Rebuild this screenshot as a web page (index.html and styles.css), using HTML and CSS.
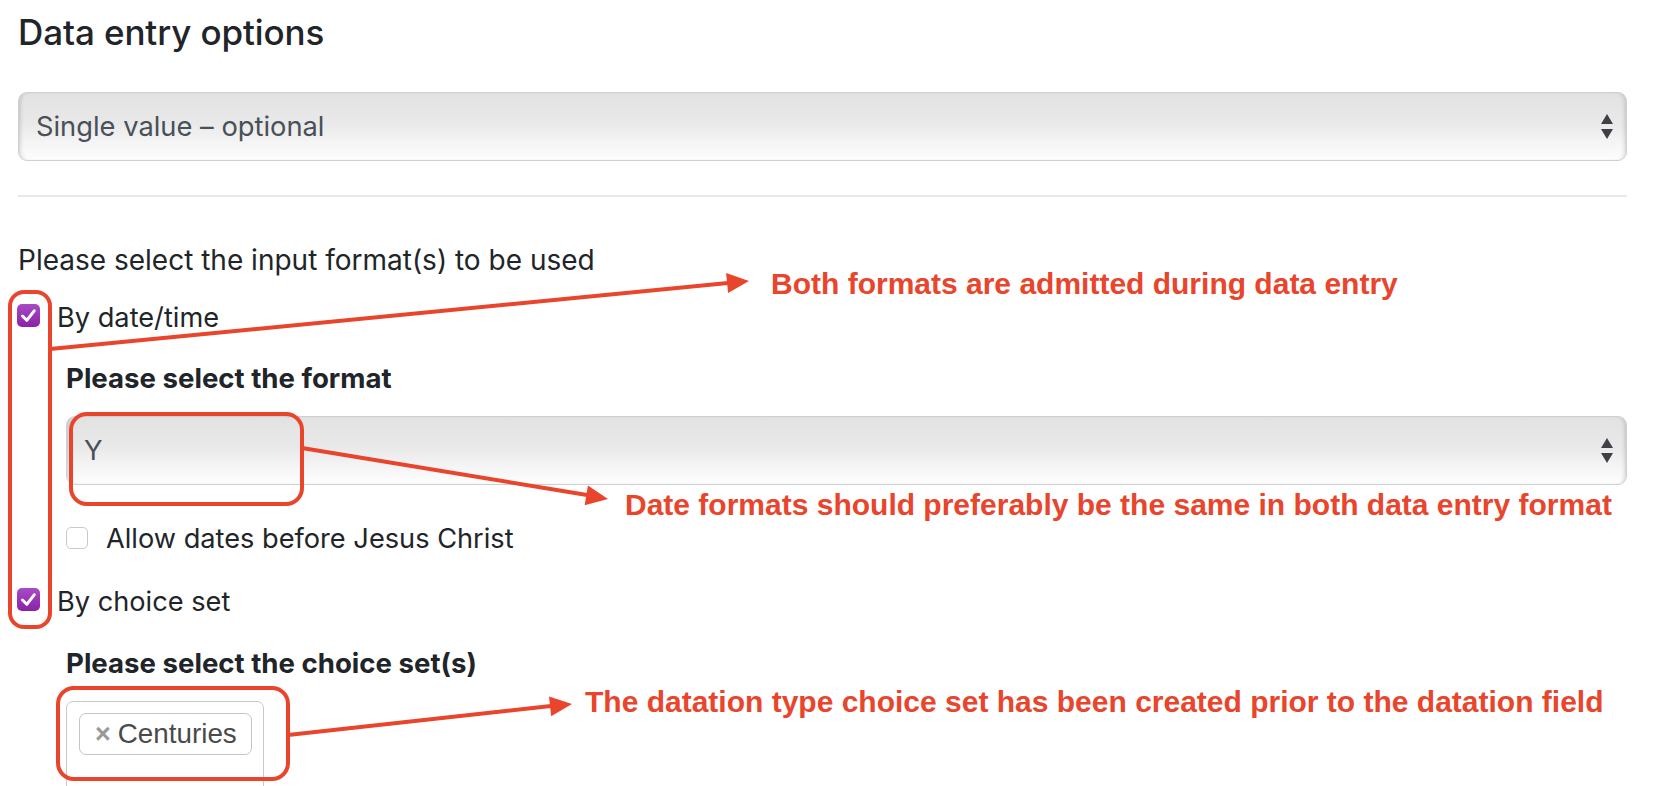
FILE: index.html
```html
<!DOCTYPE html>
<html lang="en">
<head>
<meta charset="utf-8">
<title>Data entry options</title>
<link rel="stylesheet" href="styles.css">
</head>
<body>
<main class="page">
  <h2 class="title">Data entry options</h2>
  <div class="select select-main">
    <span class="select-text">Single value – optional</span>
    <svg class="arrows" width="12" height="25" viewBox="0 0 12 25"><polygon points="0,10 6,0 12,10"/><polygon points="0,15 12,15 6,25"/></svg>
  </div>
  <hr class="sep">
  <p class="label">Please select the input format(s) to be used</p>
  <div class="check row-1">
    <span class="box checked"><svg viewBox="0 0 23 23" width="23" height="23"><path d="M5.5 12 L9.8 16.3 L17.2 6.8"/></svg></span>
    <span class="check-text">By date/time</span>
  </div>
  <div class="indent">
    <p class="label strong label-format">Please select the format</p>
    <div class="select select-format">
      <span class="select-text">Y</span>
      <svg class="arrows" width="12" height="25" viewBox="0 0 12 25"><polygon points="0,10 6,0 12,10"/><polygon points="0,15 12,15 6,25"/></svg>
    </div>
    <div class="check row-bc">
      <span class="box"></span>
      <span class="check-text">Allow dates before Jesus Christ</span>
    </div>
  </div>
  <div class="check row-2">
    <span class="box checked"><svg viewBox="0 0 23 23" width="23" height="23"><path d="M5.5 12 L9.8 16.3 L17.2 6.8"/></svg></span>
    <span class="check-text">By choice set</span>
  </div>
  <div class="indent">
    <p class="label strong label-choice">Please select the choice set(s)</p>
    <div class="choices">
      <span class="tag"><span class="tag-x">×</span>Centuries</span>
    </div>
  </div>
</main>

<svg class="annot" width="1660" height="786" viewBox="0 0 1660 786">
  <g class="annot-stroke">
    <rect x="10" y="292" width="40" height="335" rx="14"/>
    <rect x="71" y="414" width="231" height="90" rx="16"/>
    <rect x="58" y="688" width="230" height="91" rx="16"/>
    <line x1="50" y1="349" x2="728" y2="283"/>
    <line x1="302" y1="448" x2="587" y2="495"/>
    <line x1="288" y1="735" x2="551" y2="706"/>
  </g>
  <g class="annot-fill">
    <polygon points="749,281 728.1,293.1 726.1,273.1"/>
    <polygon points="608,499 584.7,505.3 587.9,485.5"/>
    <polygon points="572,704 551.2,716.3 549.0,696.5"/>
  </g>
</svg>
<p class="note note-1">Both formats are admitted during data entry</p>
<p class="note note-2">Date formats should preferably be the same in both data entry format</p>
<p class="note note-3">The datation type choice set has been created prior to the datation field</p>
</body>
</html>
```

FILE: styles.css
```css
html, body {
  margin: 0;
  padding: 0;
  background: #ffffff;
}

body {
  width: 1660px;
  height: 786px;
  overflow: hidden;
  position: relative;
  font-family: "Inter", "Noto Sans", sans-serif;
  color: #212529;
}

.page {
  padding: 11px 33px 0 18px;
  display: flex;
  flex-direction: column;
}

.title {
  margin: 0;
  font-size: 35px;
  line-height: 42px;
  font-weight: 500;
  letter-spacing: -0.1px;
}

.select {
  height: 69px;
  box-sizing: border-box;
  border: 1.5px solid #cdd1d6;
  border-radius: 9px;
  background: linear-gradient(to bottom, #e2e2e2 0%, #e9e9e9 45%, #f3f3f3 70%, #fdfdfd 100%);
  box-shadow: inset 4px 0 4px -3px rgba(0, 0, 0, 0.18), inset -4px 0 4px -3px rgba(0, 0, 0, 0.18);
  display: flex;
  align-items: center;
  justify-content: space-between;
  padding: 0 13px 0 17px;
}

.select-main {
  margin-top: 39px;
}

.select-text {
  font-size: 27.3px;
  color: #495057;
  line-height: 42px;
}

.arrows polygon {
  fill: #3d4145;
}

.sep {
  margin: 34px 0 0 0;
  border: 0;
  height: 2px;
  background: #e8e8e8;
}

.label {
  margin: 42px 0 0 0;
  font-size: 28px;
  line-height: 42px;
}

.strong {
  font-weight: 700;
  font-size: 27.6px;
}

.check {
  display: flex;
  align-items: flex-start;
  height: 42px;
  font-size: 27.2px;
  line-height: 42px;
}

.box {
  flex: none;
  width: 22px;
  height: 22px;
  box-sizing: border-box;
  border-radius: 5px;
  border: 1.5px solid #c9c9c9;
  background: #ffffff;
  margin-right: 18px;
  display: flex;
}

.box.checked {
  width: 23px;
  height: 23px;
  border: 0;
  background: linear-gradient(to bottom, #a84bc6, #8a22a6);
  margin-left: -1px;
  margin-right: 17px;
}

.box svg path {
  fill: none;
  stroke: #ffffff;
  stroke-width: 3;
  stroke-linecap: round;
  stroke-linejoin: round;
}

.row-1 {
  margin-top: 16px;
}

.row-1 .box {
  margin-top: 7px;
}

.row-bc {
  margin-top: 33px;
}

.row-bc .box {
  margin-top: 9px;
}

.row-2 {
  margin-top: 21px;
}

.row-2 .box {
  margin-top: 7px;
}

.indent {
  padding-left: 48px;
  display: flex;
  flex-direction: column;
}

.label-format {
  margin-top: 18px;
}

.select-format {
  margin-top: 17px;
}

.label-choice {
  margin-top: 19px;
}

.choices {
  margin-top: 17px;
  width: 198px;
  height: 140px;
  box-sizing: border-box;
  border: 1.5px solid #c9c9c9;
  border-radius: 7px;
  padding: 11px 0 0 12px;
}

.tag {
  display: inline-flex;
  align-items: center;
  height: 42px;
  box-sizing: border-box;
  border: 1.5px solid #c4c4c4;
  border-radius: 7px;
  padding: 0 14px 0 15px;
  font-family: "Liberation Sans", Arial, sans-serif;
  font-size: 27.8px;
  color: #4a4a4a;
}

.tag-x {
  color: #999999;
  font-weight: 700;
  font-size: 27px;
  margin-right: 7px;
}

.annot {
  position: absolute;
  left: 0;
  top: 0;
  pointer-events: none;
}

.annot-stroke {
  fill: none;
  stroke: #e8452c;
  stroke-width: 4;
}

.annot-fill {
  fill: #e8452c;
}

.note {
  position: absolute;
  margin: 0;
  font-family: "Liberation Sans", Arial, sans-serif;
  font-weight: 700;
  font-size: 30px;
  line-height: 30px;
  color: #e8452c;
  white-space: nowrap;
}

.note-1 {
  left: 771px;
  top: 269px;
}

.note-2 {
  left: 625px;
  top: 490px;
}

.note-3 {
  left: 585px;
  top: 687px;
}
```
